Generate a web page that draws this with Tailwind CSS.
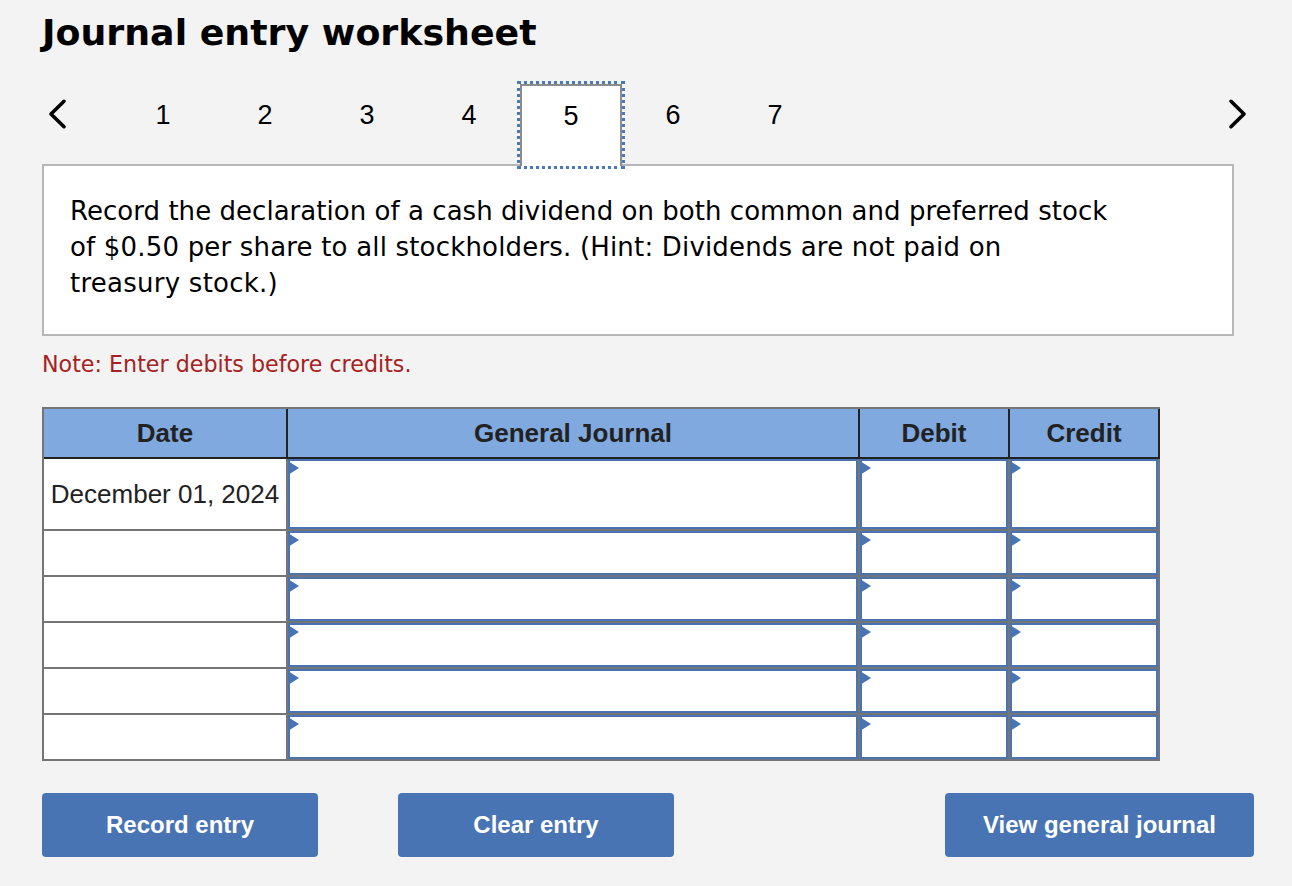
<!DOCTYPE html>
<html lang="en">
<head>
    <meta charset="UTF-8">
    <title>Journal entry worksheet</title>
    <script src="https://cdn.jsdelivr.net/npm/@tailwindcss/browser@4"></script>
</head>
<body class="h-[886px] overflow-hidden bg-[#f3f3f3] font-['Liberation_Sans',Arial,sans-serif] text-[#222]">
    <div class="pl-[42px] pr-[38px] pt-[10px]">
        <h1 class="font-['DejaVu_Sans',Verdana,sans-serif] text-[36.35px] leading-[46px] font-bold text-black">Journal entry worksheet</h1>

        <!-- tabs -->
        <div class="relative z-10 mt-[25px] flex h-[88px] items-start text-[27px] text-black">
            <div class="flex h-[66px] w-[70px] items-center">
                <svg width="22" height="32" viewBox="0 0 22 32" class="ml-[4px]"><path d="M18 3.3 L5 16 L18 28.7" fill="none" stroke="#000" stroke-width="3.6" stroke-linecap="round" stroke-linejoin="round"/></svg>
            </div>
            <div class="flex h-[68px] w-[102px] items-center justify-center">1</div>
            <div class="flex h-[68px] w-[102px] items-center justify-center">2</div>
            <div class="flex h-[68px] w-[102px] items-center justify-center">3</div>
            <div class="flex h-[68px] w-[102px] items-center justify-center">4</div>
            <div class="mx-[-3px] h-[88px] w-[108px] border-[3px] border-dotted border-[#4a78bd]">
                <div class="flex h-[82px] w-[102px] justify-center border-2 border-b-0 border-[#8c8c8c] bg-white pt-[10px]">5</div>
            </div>
            <div class="flex h-[68px] w-[102px] items-center justify-center">6</div>
            <div class="flex h-[68px] w-[102px] items-center justify-center">7</div>
            <div class="ml-auto flex h-[66px] items-center">
                <svg width="22" height="32" viewBox="0 0 22 32" class="mr-[5px]"><path d="M4 3.3 L17 16 L4 28.7" fill="none" stroke="#000" stroke-width="3.6" stroke-linecap="round" stroke-linejoin="round"/></svg>
            </div>
        </div>

        <!-- question -->
        <div class="mt-[-5px] h-[172px] w-[1192px] border-2 border-[#b7b7b7] bg-white px-[26px] pt-[27px] font-['DejaVu_Sans',Verdana,sans-serif] text-[26px] leading-[36px] text-black">
            <span class="block tracking-[0.04px]">Record the declaration of a cash dividend on both common and preferred stock</span>
            <span class="block tracking-[0.18px]">of $0.50 per share to all stockholders. (Hint: Dividends are not paid on</span>
            <span class="block tracking-[0.25px]">treasury stock.)</span>
        </div>
        <p class="mt-[13px] font-['DejaVu_Sans',Verdana,sans-serif] text-[22.2px] leading-[30px] text-[#a52222]">Note: Enter debits before credits.</p>

        <!-- journal table -->
        <div class="mt-[28px] grid w-[1118px] grid-cols-[244px_572px_150px_150px] grid-rows-[50px_72px_46px_46px_46px_46px_46px] border-t-2 border-l-2 border-[#757575] text-[26px]">
            <div class="flex items-center justify-center border-r-2 border-b-2 border-[#222] bg-[#7fa9df] font-bold">Date</div>
            <div class="flex items-center justify-center border-r-2 border-b-2 border-[#222] bg-[#7fa9df] font-bold">General Journal</div>
            <div class="flex items-center justify-center border-r-2 border-b-2 border-[#222] bg-[#7fa9df] font-bold">Debit</div>
            <div class="flex items-center justify-center border-r-2 border-b-2 border-[#222] bg-[#7fa9df] font-bold">Credit</div>

            <div class="flex items-center justify-center border-r-2 border-b-2 border-[#757575] bg-white">December 01, 2024</div>
            <div class="relative border-r-2 border-b-2 border-[#757575] bg-white"><div class="h-full border-2 border-[#4874b4]"></div><span class="absolute top-[2px] left-[0px] border-y-[7px] border-l-[11px] border-y-transparent border-l-[#4874b4]"></span></div>
            <div class="relative border-r-2 border-b-2 border-[#757575] bg-white"><div class="h-full border-2 border-[#4874b4]"></div><span class="absolute top-[2px] left-[0px] border-y-[7px] border-l-[11px] border-y-transparent border-l-[#4874b4]"></span></div>
            <div class="relative border-r-2 border-b-2 border-[#757575] bg-white"><div class="h-full border-2 border-[#4874b4]"></div><span class="absolute top-[2px] left-[0px] border-y-[7px] border-l-[11px] border-y-transparent border-l-[#4874b4]"></span></div>

            <div class="border-r-2 border-b-2 border-[#757575] bg-white"></div>
            <div class="relative border-r-2 border-b-2 border-[#757575] bg-white"><div class="h-full border-2 border-[#4874b4]"></div><span class="absolute top-[2px] left-[0px] border-y-[7px] border-l-[11px] border-y-transparent border-l-[#4874b4]"></span></div>
            <div class="relative border-r-2 border-b-2 border-[#757575] bg-white"><div class="h-full border-2 border-[#4874b4]"></div><span class="absolute top-[2px] left-[0px] border-y-[7px] border-l-[11px] border-y-transparent border-l-[#4874b4]"></span></div>
            <div class="relative border-r-2 border-b-2 border-[#757575] bg-white"><div class="h-full border-2 border-[#4874b4]"></div><span class="absolute top-[2px] left-[0px] border-y-[7px] border-l-[11px] border-y-transparent border-l-[#4874b4]"></span></div>

            <div class="border-r-2 border-b-2 border-[#757575] bg-white"></div>
            <div class="relative border-r-2 border-b-2 border-[#757575] bg-white"><div class="h-full border-2 border-[#4874b4]"></div><span class="absolute top-[2px] left-[0px] border-y-[7px] border-l-[11px] border-y-transparent border-l-[#4874b4]"></span></div>
            <div class="relative border-r-2 border-b-2 border-[#757575] bg-white"><div class="h-full border-2 border-[#4874b4]"></div><span class="absolute top-[2px] left-[0px] border-y-[7px] border-l-[11px] border-y-transparent border-l-[#4874b4]"></span></div>
            <div class="relative border-r-2 border-b-2 border-[#757575] bg-white"><div class="h-full border-2 border-[#4874b4]"></div><span class="absolute top-[2px] left-[0px] border-y-[7px] border-l-[11px] border-y-transparent border-l-[#4874b4]"></span></div>

            <div class="border-r-2 border-b-2 border-[#757575] bg-white"></div>
            <div class="relative border-r-2 border-b-2 border-[#757575] bg-white"><div class="h-full border-2 border-[#4874b4]"></div><span class="absolute top-[2px] left-[0px] border-y-[7px] border-l-[11px] border-y-transparent border-l-[#4874b4]"></span></div>
            <div class="relative border-r-2 border-b-2 border-[#757575] bg-white"><div class="h-full border-2 border-[#4874b4]"></div><span class="absolute top-[2px] left-[0px] border-y-[7px] border-l-[11px] border-y-transparent border-l-[#4874b4]"></span></div>
            <div class="relative border-r-2 border-b-2 border-[#757575] bg-white"><div class="h-full border-2 border-[#4874b4]"></div><span class="absolute top-[2px] left-[0px] border-y-[7px] border-l-[11px] border-y-transparent border-l-[#4874b4]"></span></div>

            <div class="border-r-2 border-b-2 border-[#757575] bg-white"></div>
            <div class="relative border-r-2 border-b-2 border-[#757575] bg-white"><div class="h-full border-2 border-[#4874b4]"></div><span class="absolute top-[2px] left-[0px] border-y-[7px] border-l-[11px] border-y-transparent border-l-[#4874b4]"></span></div>
            <div class="relative border-r-2 border-b-2 border-[#757575] bg-white"><div class="h-full border-2 border-[#4874b4]"></div><span class="absolute top-[2px] left-[0px] border-y-[7px] border-l-[11px] border-y-transparent border-l-[#4874b4]"></span></div>
            <div class="relative border-r-2 border-b-2 border-[#757575] bg-white"><div class="h-full border-2 border-[#4874b4]"></div><span class="absolute top-[2px] left-[0px] border-y-[7px] border-l-[11px] border-y-transparent border-l-[#4874b4]"></span></div>

            <div class="border-r-2 border-b-2 border-[#757575] bg-white"></div>
            <div class="relative border-r-2 border-b-2 border-[#757575] bg-white"><div class="h-full border-2 border-[#4874b4]"></div><span class="absolute top-[2px] left-[0px] border-y-[7px] border-l-[11px] border-y-transparent border-l-[#4874b4]"></span></div>
            <div class="relative border-r-2 border-b-2 border-[#757575] bg-white"><div class="h-full border-2 border-[#4874b4]"></div><span class="absolute top-[2px] left-[0px] border-y-[7px] border-l-[11px] border-y-transparent border-l-[#4874b4]"></span></div>
            <div class="relative border-r-2 border-b-2 border-[#757575] bg-white"><div class="h-full border-2 border-[#4874b4]"></div><span class="absolute top-[2px] left-[0px] border-y-[7px] border-l-[11px] border-y-transparent border-l-[#4874b4]"></span></div>
        </div>

        <!-- actions -->
        <div class="mt-[32px] flex text-[24px] font-bold text-white">
            <button class="h-[64px] w-[276px] rounded-[4px] bg-[#4874b4]">Record entry</button>
            <button class="ml-[80px] h-[64px] w-[276px] rounded-[4px] bg-[#4874b4]">Clear entry</button>
            <button class="ml-auto h-[64px] w-[309px] rounded-[4px] bg-[#4874b4]">View general journal</button>
        </div>
    </div>
</body>
</html>
